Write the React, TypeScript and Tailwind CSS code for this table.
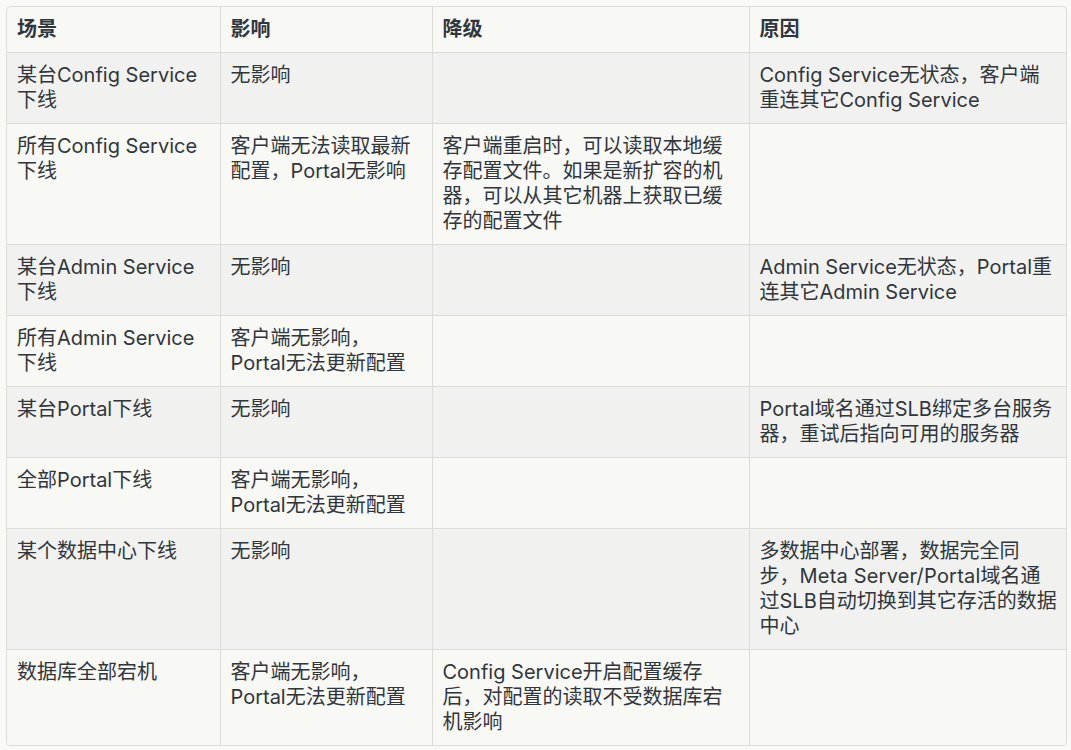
import type { ReactNode } from "react";

const rows: ReactNode[][] = [
  ["某台Config Service下线", "无影响", "", "Config Service无状态，客户端重连其它Config Service"],
  ["所有Config Service下线", "客户端无法读取最新配置，Portal无影响", "客户端重启时，可以读取本地缓存配置文件。如果是新扩容的机器，可以从其它机器上获取已缓存的配置文件", ""],
  ["某台Admin Service下线", "无影响", "", "Admin Service无状态，Portal重连其它Admin Service"],
  ["所有Admin Service下线", "客户端无影响，Portal无法更新配置", "", ""],
  ["某台Portal下线", "无影响", "", "Portal域名通过SLB绑定多台服务器，重试后指向可用的服务器"],
  ["全部Portal下线", "客户端无影响，Portal无法更新配置", "", ""],
  [
    "某个数据中心下线",
    "无影响",
    "",
    <>
      多数据中心部署，数据完全同步，<span className="tracking-[0.2px]">Meta Server/Portal</span>域名通过SLB自动切换到其它存活的数据中心
    </>,
  ],
  ["数据库全部宕机", "客户端无影响，Portal无法更新配置", "Config Service开启配置缓存后，对配置的读取不受数据库宕机影响", ""],
];

const headers = ["场景", "影响", "降级", "原因"];

export default function App() {
  return (
    <div
      className="min-h-[750px] w-[1071px] bg-[#f9f9f6] p-[6px] text-[20px] leading-[25px] text-[#30363c]"
      style={{ fontFamily: 'Inter, "Noto Sans CJK SC", sans-serif' }}
    >
      <div className="w-[1061px] overflow-hidden rounded-[4px] border border-[#dcdcd8] bg-[#f8f8f5]">
        <table className="w-full table-fixed border-collapse">
          <colgroup>
            <col className="w-[213px]" />
            <col className="w-[212px]" />
            <col className="w-[317px]" />
            <col />
          </colgroup>
          <thead>
            <tr>
              {headers.map((h, i) => (
                <th
                  key={h}
                  className={`pl-[10px] pr-[9px] py-[10px] text-left align-top font-bold ${i > 0 ? "border-l border-[#dcdcd8]" : ""}`}
                >
                  {h}
                </th>
              ))}
            </tr>
          </thead>
          <tbody>
            {rows.map((r, ri) => (
              <tr key={ri} className={`border-t border-[#dcdcd8] ${ri % 2 === 0 ? "bg-[#f1f2f0]" : "bg-[#f8f8f5]"}`}>
                {r.map((c, ci) => (
                  <td
                    key={ci}
                    className={`pl-[10px] pr-[9px] py-[10px] align-top ${ci > 0 ? "border-l border-[#dcdcd8]" : ""}`}
                  >
                    {c}
                  </td>
                ))}
              </tr>
            ))}
          </tbody>
        </table>
      </div>
    </div>
  );
}
